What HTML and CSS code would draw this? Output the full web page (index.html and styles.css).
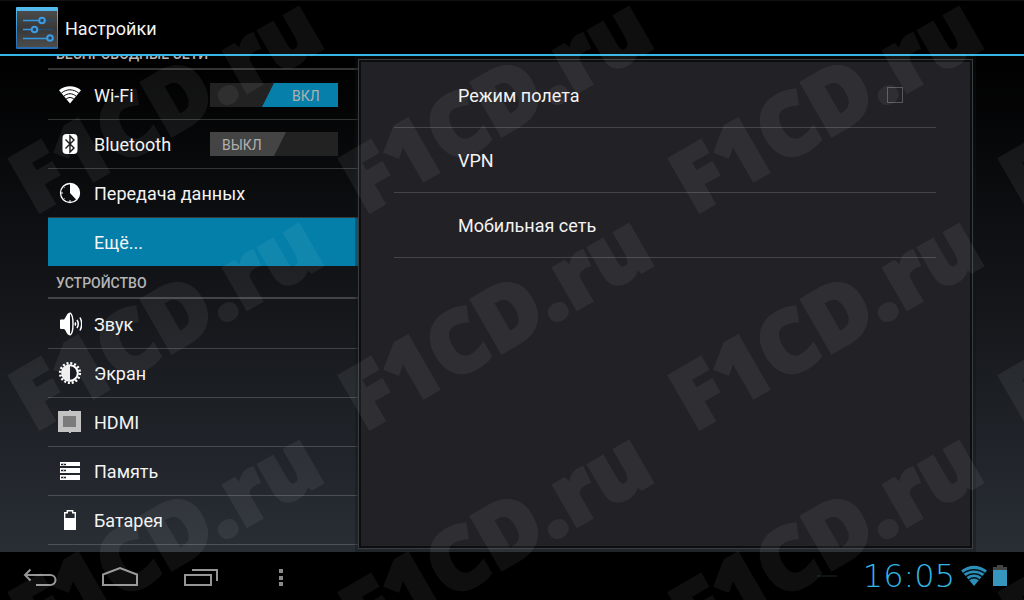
FILE: index.html
```html
<!DOCTYPE html>
<html lang="ru">
<head>
    <meta charset="UTF-8">
    <meta name="viewport" content="width=device-width, initial-scale=1.0">
    <title>Настройки</title>
    <link rel="stylesheet" href="styles.css">
</head>
<body>
    <header class="topbar">
        <svg class="app-icon" width="42" height="42" viewBox="0 0 42 42">
            <defs>
                <linearGradient id="face" x1="0" y1="0" x2="0" y2="1">
                    <stop offset="0" stop-color="#4a4a4a"/>
                    <stop offset="0.5" stop-color="#383838"/>
                    <stop offset="1" stop-color="#4c4c4c"/>
                </linearGradient>
                <linearGradient id="edge" x1="0" y1="0" x2="0" y2="1">
                    <stop offset="0" stop-color="#55bdf0"/>
                    <stop offset="1" stop-color="#2468ad"/>
                </linearGradient>
            </defs>
            <rect width="42" height="42" rx="1" fill="url(#edge)"/>
            <rect x="1" y="4" width="40" height="36" fill="url(#face)"/>
            <path d="M7 13.5h30M7 22.5h30M7 31.5h30" stroke="#254c70" stroke-width="1.3"/>
            <path d="M7 13.5h16M7 22.5h9M7 31.5h24" stroke="#3b96dc" stroke-width="1.5"/>
            <g fill="#29425a" stroke="#3f9be0" stroke-width="2">
                <circle cx="26" cy="13.500" r="2.800"/>
                <circle cx="18.500" cy="22.500" r="2.800"/>
                <circle cx="34" cy="31" r="2.800"/>
            </g>
        </svg>
        <h1>Настройки</h1>
    </header>

    <main class="settings">
        <nav class="sidebar">
            <h2 class="scrolled">Беспроводные сети</h2>
            <ul>
                <li>
                    <a href="#wifi">
                        <svg width="24" height="24" viewBox="0 0 24 24">
                            <path d="M1 7.200C7 1.800 17 1.800 23 7.200L12 20.500z" fill="#fff"/>
                            <path d="M3.300 10.200c5-4.500 12.400-4.500 17.400 0M5.800 13.200c4-3.300 8.400-3.300 12.400 0M8 16.200c2.600-2.200 5.400-2.200 8 0" fill="none" stroke="#070809" stroke-width="1"/>
                        </svg>
                        Wi-Fi
                    </a>
                    <label class="switch on"><input type="checkbox" aria-label="Wi-Fi" checked><span>ВКЛ</span></label>
                </li>
                <li>
                    <a href="#bluetooth">
                        <svg width="24" height="24" viewBox="0 0 24 24">
                            <rect x="4.500" y="2" width="15" height="20" rx="4" fill="#fff"/>
                            <path d="M7.500 7.500l8.500 8.500-4 4V4l4 4-8.500 8.500" fill="none" stroke="#0b0c0e" stroke-width="1.400"/>
                        </svg>
                        Bluetooth
                    </a>
                    <label class="switch"><input type="checkbox" aria-label="Bluetooth"><span>ВЫКЛ</span></label>
                </li>
                <li>
                    <a href="#data">
                        <svg width="24" height="24" viewBox="0 0 24 24">
                            <circle cx="12" cy="12" r="9.500" fill="none" stroke="#fff" stroke-width="1.300"/>
                            <path d="M12 12V2.500a9.500 9.500 0 0 1 6.500 16.500z" fill="#fff"/>
                            <path d="M3 12h2M12 21v-2M5.500 5.500l1 1M5.500 18.500l1-1" stroke="#fff" stroke-width="1"/>
                        </svg>
                        Передача данных
                    </a>
                </li>
                <li class="selected"><a href="#more" class="no-icon">Ещё...</a></li>
            </ul>
            <h2>Устройство</h2>
            <ul>
                <li>
                    <a href="#sound">
                        <svg width="24" height="24" viewBox="0 0 24 24">
                            <path d="M2 8.500Q2 7.500 3 7.500h3C8 6 8.500 1 12 .5v23C8.500 23 8 18 6 17H3q-1 0-1-1z" fill="#fff"/>
                            <path d="M12 .8c4 2 4 20.400 0 22.400" fill="none" stroke="#fff" stroke-width="1.400"/>
                            <path d="M17 10.500q1 1.500 0 3M19 8q2.500 4 0 8M22 5.500q3.400 6.500 0 13" fill="none" stroke="#fff" stroke-width="1.500"/>
                        </svg>
                        Звук
                    </a>
                </li>
                <li>
                    <a href="#display">
                        <svg width="24" height="24" viewBox="0 0 24 24">
                            <circle cx="12" cy="12" r="9.800" fill="none" stroke="#fff" stroke-width="2.600" stroke-dasharray="2 1.850"/>
                            <circle cx="12" cy="12" r="7.800" fill="none" stroke="#fff" stroke-width="2"/>
                            <path d="M12 4a8 8 0 0 0 0 16z" fill="#eee"/>
                        </svg>
                        Экран
                    </a>
                </li>
                <li>
                    <a href="#hdmi">
                        <svg width="24" height="24" viewBox="0 0 24 24">
                            <path d="M0 1h11V0h2v1h10v21H13v1h-2v-1H0z" fill="#c2c2c2"/>
                            <rect x="5" y="6" width="13" height="11" fill="#7b7b7b"/>
                        </svg>
                        HDMI
                    </a>
                </li>
                <li>
                    <a href="#storage">
                        <svg width="24" height="24" viewBox="0 0 24 24">
                            <path d="M2 3h20v4H2zM2 9h20v5H2zM2 16h20v5H2z" fill="#fff"/>
                            <path d="M3 5.500h5M3 11.500h5M3 18.500h5" stroke="#202428" stroke-width="1.300"/>
                            <path d="M5 5.500h1M5 11.500h1M5 18.500h1" stroke="#bbb" stroke-width="1.300"/>
                        </svg>
                        Память
                    </a>
                </li>
                <li>
                    <a href="#battery">
                        <svg width="24" height="24" viewBox="0 0 24 24">
                            <path d="M6.700 21.300V4.700h2.600v-2h5.400v2h2.600v16.600z" fill="none" stroke="#fff" stroke-width="1.400"/>
                            <path d="M6 10h12v12H6z" fill="#fff"/>
                        </svg>
                        Батарея
                    </a>
                </li>
            </ul>
        </nav>

        <section class="panel">
            <ul>
                <li>
                    <label for="airplane">Режим полета</label>
                    <input type="checkbox" id="airplane">
                </li>
                <li><a href="#vpn">VPN</a></li>
                <li><a href="#mobile">Мобильная сеть</a></li>
            </ul>
        </section>
    </main>

    <footer class="navbar">
        <button type="button" aria-label="Назад">
            <svg width="36" height="24" viewBox="0 0 36 24">
                <path d="M14 21h14.500a5 5 0 0 0 0-10H3M8.500 5.500L3 11l5.500 5.500"/>
            </svg>
        </button>
        <button type="button" aria-label="Домой">
            <svg width="36" height="24" viewBox="0 0 36 24">
                <path d="M1 21V10.500L18 4l17 6.500V21z"/>
            </svg>
        </button>
        <button type="button" aria-label="Недавние">
            <svg width="36" height="24" viewBox="0 0 36 24">
                <path d="M3 11h26v10H3zM10 6h25v11"/>
            </svg>
        </button>
        <button type="button" aria-label="Меню">
            <svg width="36" height="24" viewBox="0 0 36 24">
                <path class="dots" d="M17 5h4v4h-4zM17 12h4v4h-4zM17 18h4v4h-4z"/>
            </svg>
        </button>
        <div class="status">
            <span class="dash"></span>
            <time>16:05</time>
            <svg width="26" height="22" viewBox="0 0 26 22">
                <path d="M0 5.500C8-.8 18-.8 26 5.500L13 21z" fill="#2c8fb8"/>
                <path d="M2 8.500c6.500-5 15.500-5 22 0M4.500 11.800c5-4 12-4 17 0M7.500 15c3.500-2.800 7.500-2.800 11 0" fill="none" stroke="#03121a" stroke-width="1.500"/>
            </svg>
            <svg width="14" height="22" viewBox="0 0 14 22">
                <path d="M0 2h4V0h6v2h4v4H0z" fill="#444"/>
                <path d="M0 5h14v16H0z" fill="#3796bd"/>
            </svg>
        </div>
    </footer>

    <div class="watermark" aria-hidden="true">
        <span>F1CD.ru</span><span>F1CD.ru</span><span>F1CD.ru</span><span>F1CD.ru</span>
        <span>F1CD.ru</span><span>F1CD.ru</span><span>F1CD.ru</span><span>F1CD.ru</span>
        <span>F1CD.ru</span><span>F1CD.ru</span><span>F1CD.ru</span><span>F1CD.ru</span>
    </div>
</body>
</html>
```
FILE: styles.css
```css
* {
    box-sizing: border-box;
}

body {
    margin: 0;
    height: 100vh;
    display: flex;
    flex-direction: column;
    position: relative;
    overflow: hidden;
    background: #000;
    color: #f3f3f3;
    font-family: Roboto, "Noto Sans", sans-serif;
    font-size: 18px;
    line-height: 24px;
}

h1, h2, ul {
    margin: 0;
    padding: 0;
    font-weight: 400;
    list-style: none;
}

a {
    color: inherit;
    text-decoration: none;
}

svg {
    display: block;
    flex: none;
}

/* Top bar */
.topbar {
    flex: none;
    display: flex;
    align-items: center;
    gap: 7px;
    height: 56px;
    padding: 0 16px;
    border-top: 1px solid #111;
    border-bottom: 2px solid #33b5e5;
}

.topbar h1 {
    padding-top: 2px;
    font-size: 18px;
}

/* Two panes */
.settings {
    flex: 1;
    min-height: 0;
    display: flex;
    padding: 0 51px 0 48px;
    overflow: hidden;
    background: linear-gradient(#000, #14161a 50%, #292e35);
}

.sidebar {
    flex: 0 0 310px;
    overflow: hidden;
}

.sidebar h2 {
    height: 32px;
    margin-bottom: 1px;
    padding: 4px 8px;
    border-bottom: 2px solid rgba(255, 255, 255, 0.2);
    color: #b5b5b5;
    font-size: 14px;
    font-weight: 500;
    text-transform: uppercase;
}

/* the list is scrolled down a little */
.sidebar .scrolled {
    margin-top: -18px;
}

.sidebar li {
    display: flex;
    align-items: center;
    height: 49px;
    padding-right: 20px;
    border-bottom: 1px solid rgba(255, 255, 255, 0.18);
}

.sidebar li a {
    flex: 1;
    display: flex;
    align-items: center;
    gap: 12px;
    height: 48px;
    padding: 2px 0 0 10px;
}

.sidebar li svg {
    margin-bottom: 2px;
}

.sidebar li .no-icon {
    padding-left: 46px;
}

.sidebar .selected {
    background: #037fa9;
    background-clip: padding-box;
    border-color: transparent;
}

.switch {
    display: flex;
    width: 128px;
    height: 24px;
    background: #222;
    color: #b0b0b0;
    font-size: 14px;
    line-height: 26px;
}

.switch input {
    appearance: none;
    position: absolute;
    margin: 0;
}

.switch span {
    width: 76px;
    padding-left: 12px;
    background: #444;
    clip-path: polygon(0 0, 100% 0, 64px 100%, 0 100%);
}

.switch.on {
    justify-content: flex-end;
}

.switch.on span {
    padding-left: 30px;
    background: #0680aa;
    clip-path: polygon(12px 0, 100% 0, 100% 100%, 0 100%);
}

.panel {
    flex: 1;
    margin: 3px 0;
    padding: 3px 36px 3px 35px;
    background: #222126;
    border: 1px solid #3a3d3f;
    box-shadow: inset 0 0 0 2px #0c0d0f, 0 0 0 3px rgba(16, 19, 21, 0.35);
}

.panel li {
    display: flex;
    align-items: center;
    height: 65px;
    padding: 2px 33px 0 64px;
    border-bottom: 1px solid #454448;
}

.panel label, .panel a {
    flex: 1;
}

.panel input {
    appearance: none;
    width: 16px;
    height: 16px;
    margin: 0 0 2px;
    border: 1px solid #58575b;
}

/* System bar */
.navbar {
    flex: none;
    display: flex;
    align-items: center;
    height: 48px;
    padding-right: 17px;
    background: #000;
}

.navbar button {
    display: flex;
    justify-content: center;
    width: 80px;
    padding: 0;
    border: 0;
    background: none;
}

.navbar button path {
    fill: none;
    stroke: #959595;
    stroke-width: 2;
}

.navbar button .dots {
    fill: #8a8a8a;
    stroke: none;
}

.status {
    flex: 1;
    display: flex;
    align-items: center;
    justify-content: flex-end;
    gap: 6px;
    color: #33b5e5;
}

.status time {
    font-family: "DejaVu Sans Light", "DejaVu Sans", sans-serif;
    font-size: 32px;
    font-weight: 200;
}

.dash {
    width: 20px;
    height: 2px;
    margin-right: 20px;
    background: #0d1415;
}

/* Site mark tiled over the whole screen */
.watermark {
    position: absolute;
    inset: 0;
    display: grid;
    grid-template-columns: repeat(4, 330px);
    grid-auto-rows: 217px;
    place-items: center;
    overflow: hidden;
    pointer-events: none;
    opacity: 0.06;
    color: #fff;
    font-family: "Open Sans", sans-serif;
    font-size: 86px;
    font-weight: 800;
    line-height: 90px;
    -webkit-text-stroke: 3px #fff;
}

.watermark span {
    margin: 0 2px 14px 0;
    transform: rotate(-30deg);
}
```
